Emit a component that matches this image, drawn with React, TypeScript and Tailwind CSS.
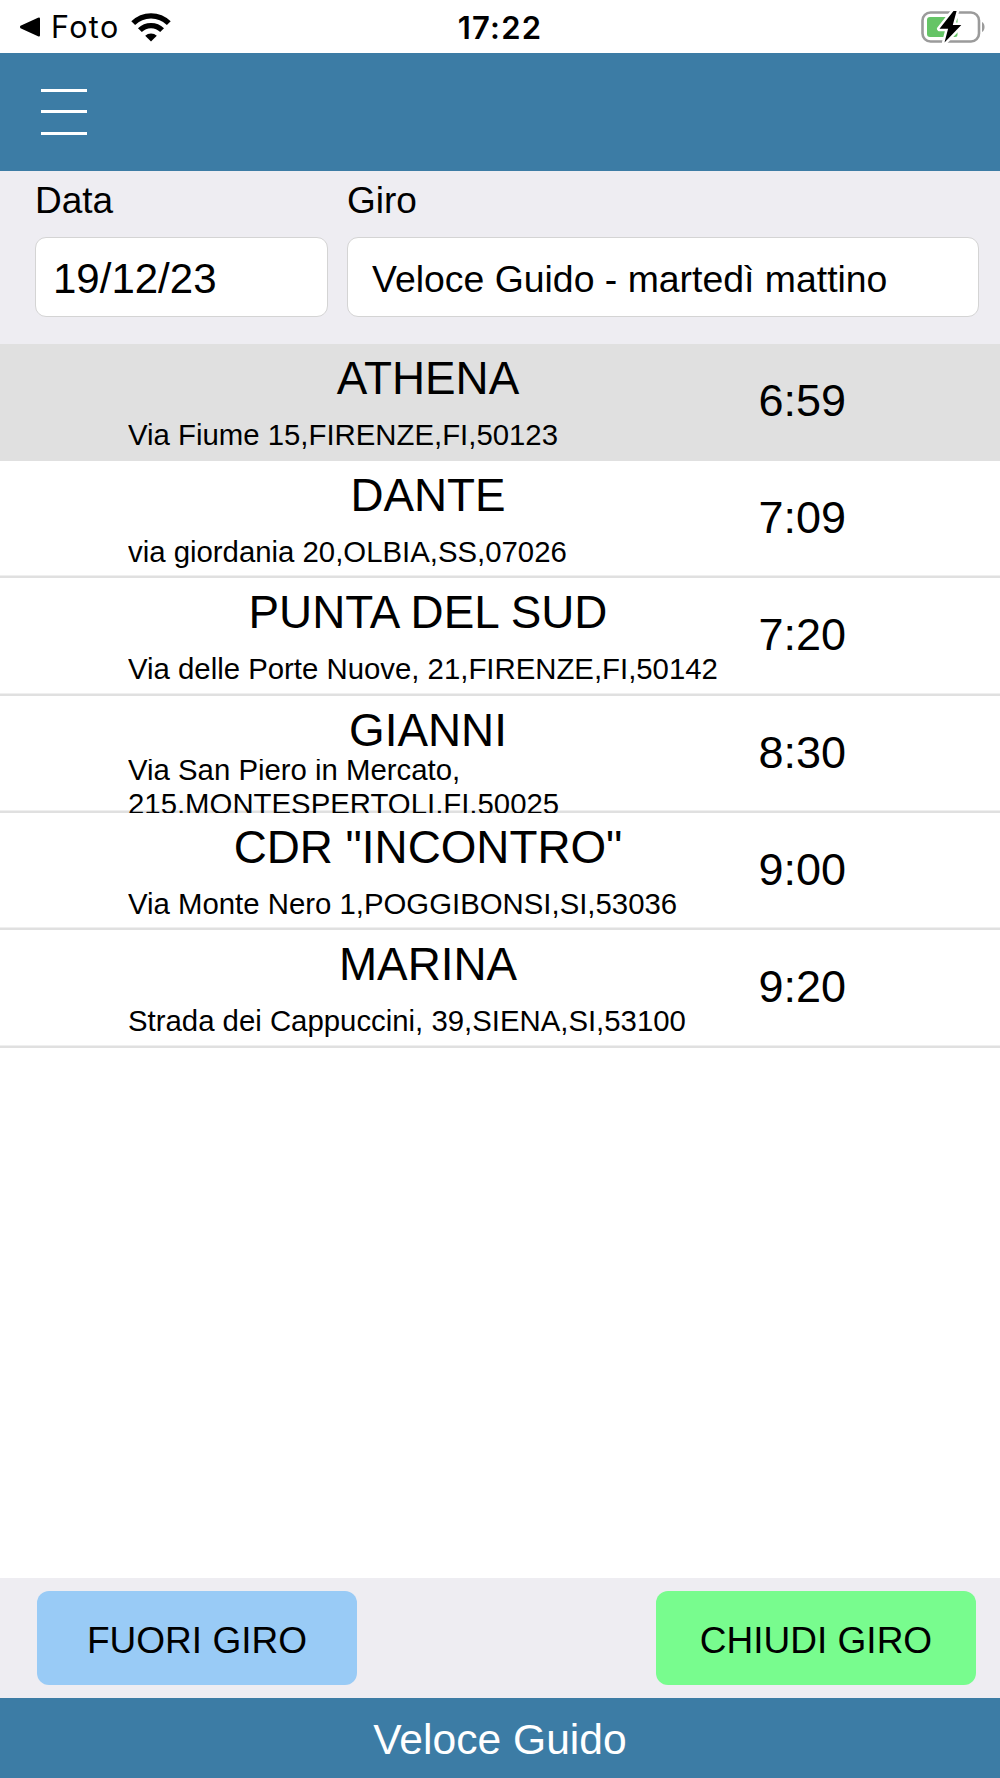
const stops = [
  { name: "ATHENA", address: "Via Fiume 15,FIRENZE,FI,50123", time: "6:59", selected: true },
  { name: "DANTE", address: "via giordania 20,OLBIA,SS,07026", time: "7:09" },
  { name: "PUNTA DEL SUD", address: "Via delle Porte Nuove, 21,FIRENZE,FI,50142", time: "7:20" },
  { name: "GIANNI", address: "Via San Piero in Mercato, 215,MONTESPERTOLI,FI,50025", time: "8:30" },
  { name: 'CDR "INCONTRO"', address: "Via Monte Nero 1,POGGIBONSI,SI,53036", time: "9:00" },
  { name: "MARINA", address: "Strada dei Cappuccini, 39,SIENA,SI,53100", time: "9:20" },
];

function WifiIcon() {
  return (
    <svg width="40" height="30" viewBox="0 0 40 30" fill="none" stroke="#000" strokeWidth="5.4">
      <path d="M2.200 11.200a25.200 25.200 0 0 1 35.600 0" />
      <path d="M8.900 18.200a15.700 15.700 0 0 1 22.200 0" />
      <path d="M20 29.500l-5.800-5.800a8.400 8.400 0 0 1 11.600 0z" fill="#000" stroke="none" />
    </svg>
  );
}

function BatteryIcon() {
  return (
    <svg width="66" height="36" viewBox="0 0 66 36">
      <rect x="2.500" y="4.500" width="56.500" height="29" rx="8" fill="none" stroke="#9b9b9b" strokeWidth="2.600" />
      <path d="M62 14c3.400 1.400 3.400 8.600 0 10z" fill="#9b9b9b" />
      <path d="M10 9h25q2.500 0 2.500 2.500v15q0 2.500-2.500 2.500H10q-3 0-3-3V12q0-3 3-3z" fill="#65c466" />
      <path
        d="M33.500 3 19.500 20.700h8.600l-3.600 13.800L41.300 17h-8.500l3.800-14z"
        fill="#000"
        stroke="#fff"
        strokeWidth="5"
        paintOrder="stroke"
        strokeLinejoin="round"
      />
    </svg>
  );
}

function StatusBar() {
  return (
    <div className="grid h-[53px] shrink-0 grid-cols-3 items-center bg-white px-5 pt-px font-['Inter',sans-serif] text-[30.500px] text-black">
      <div className="flex items-center">
        <svg width="20" height="20" viewBox="0 0 20 20">
          <path d="M0.500 8.800 18 .700q2-.800 2 1v16.600q0 1.800-2 1L.500 11.200q-1-1.200 0-2.400z" />
        </svg>
        <span className="ml-[11px] tracking-[0.045em]">Foto</span>
        <span className="-mt-px ml-[11px]">
          <WifiIcon />
        </span>
      </div>
      <span className="pt-0.5 text-center text-[31px] font-semibold tracking-[0.04em]">17:22</span>
      <div className="-mt-0.5 -mr-[6px] flex justify-end">
        <BatteryIcon />
      </div>
    </div>
  );
}

export default function App() {
  return (
    <div className="flex h-[1778px] w-[1000px] flex-col overflow-hidden bg-white font-['Liberation_Sans',Arial,sans-serif] text-black">
      <StatusBar />

      <header className="flex h-[117.500px] shrink-0 items-center bg-[#3c7ca5] pl-[41px]">
        <button aria-label="Menu" className="flex flex-col gap-[18.500px]">
          <span className="h-[3px] w-[46px] bg-white" />
          <span className="h-[3px] w-[46px] bg-white" />
          <span className="h-[3px] w-[46px] bg-white" />
        </button>
      </header>

      <section className="flex h-[173px] shrink-0 gap-[19px] bg-[#eeedf2] pl-[35px] text-[37px]">
        <div className="w-[293px]">
          <p className="h-[66.500px] leading-[60px]">Data</p>
          <div className="flex h-[80px] items-center rounded-[11px] border border-[#d4d4d4] bg-white pt-0.5 pl-[17px] text-[42px]">
            19/12/23
          </div>
        </div>
        <div className="w-[632px]">
          <p className="h-[66.500px] leading-[60px]">Giro</p>
          <div className="flex h-[80px] items-center rounded-[11px] border border-[#d4d4d4] bg-white pt-[5px] pl-6 text-[37.400px]">
            Veloce Guido - martedì mattino
          </div>
        </div>
      </section>

      <ul className="flex-1">
        {stops.map((stop) => (
          <li
            key={stop.name}
            className={`flex h-[117.350px] pl-32 shadow-[inset_0_-2.500px_0_#e0e0e0] ${
              stop.selected ? "bg-[#e0e0e0]" : "bg-white"
            }`}
          >
            <div className="w-[600px]">
              <p className="h-[63px] text-center text-[45.800px] leading-[70px]">{stop.name}</p>
              <div className="flex h-[54px] items-center overflow-hidden pt-0.5">
                <p className="text-[29.350px] leading-[34px]">{stop.address}</p>
              </div>
            </div>
            <p className="ml-[30.500px] text-[45px] leading-[113px]">{stop.time}</p>
          </li>
        ))}
      </ul>

      <div className="flex h-[120px] shrink-0 items-center justify-between bg-[#eeedf2] pr-6 pl-[37px] text-[37px]">
        <button className="h-[94px] w-80 rounded-xl bg-[#99cbf6] pt-1.5">FUORI GIRO</button>
        <button className="h-[94px] w-80 rounded-xl bg-[#78fc8e] pt-1.5">CHIUDI GIRO</button>
      </div>

      <footer className="h-20 shrink-0 bg-[#3c7ca5] text-center text-[42.600px] leading-[83px] text-white">
        Veloce Guido
      </footer>
    </div>
  );
}
